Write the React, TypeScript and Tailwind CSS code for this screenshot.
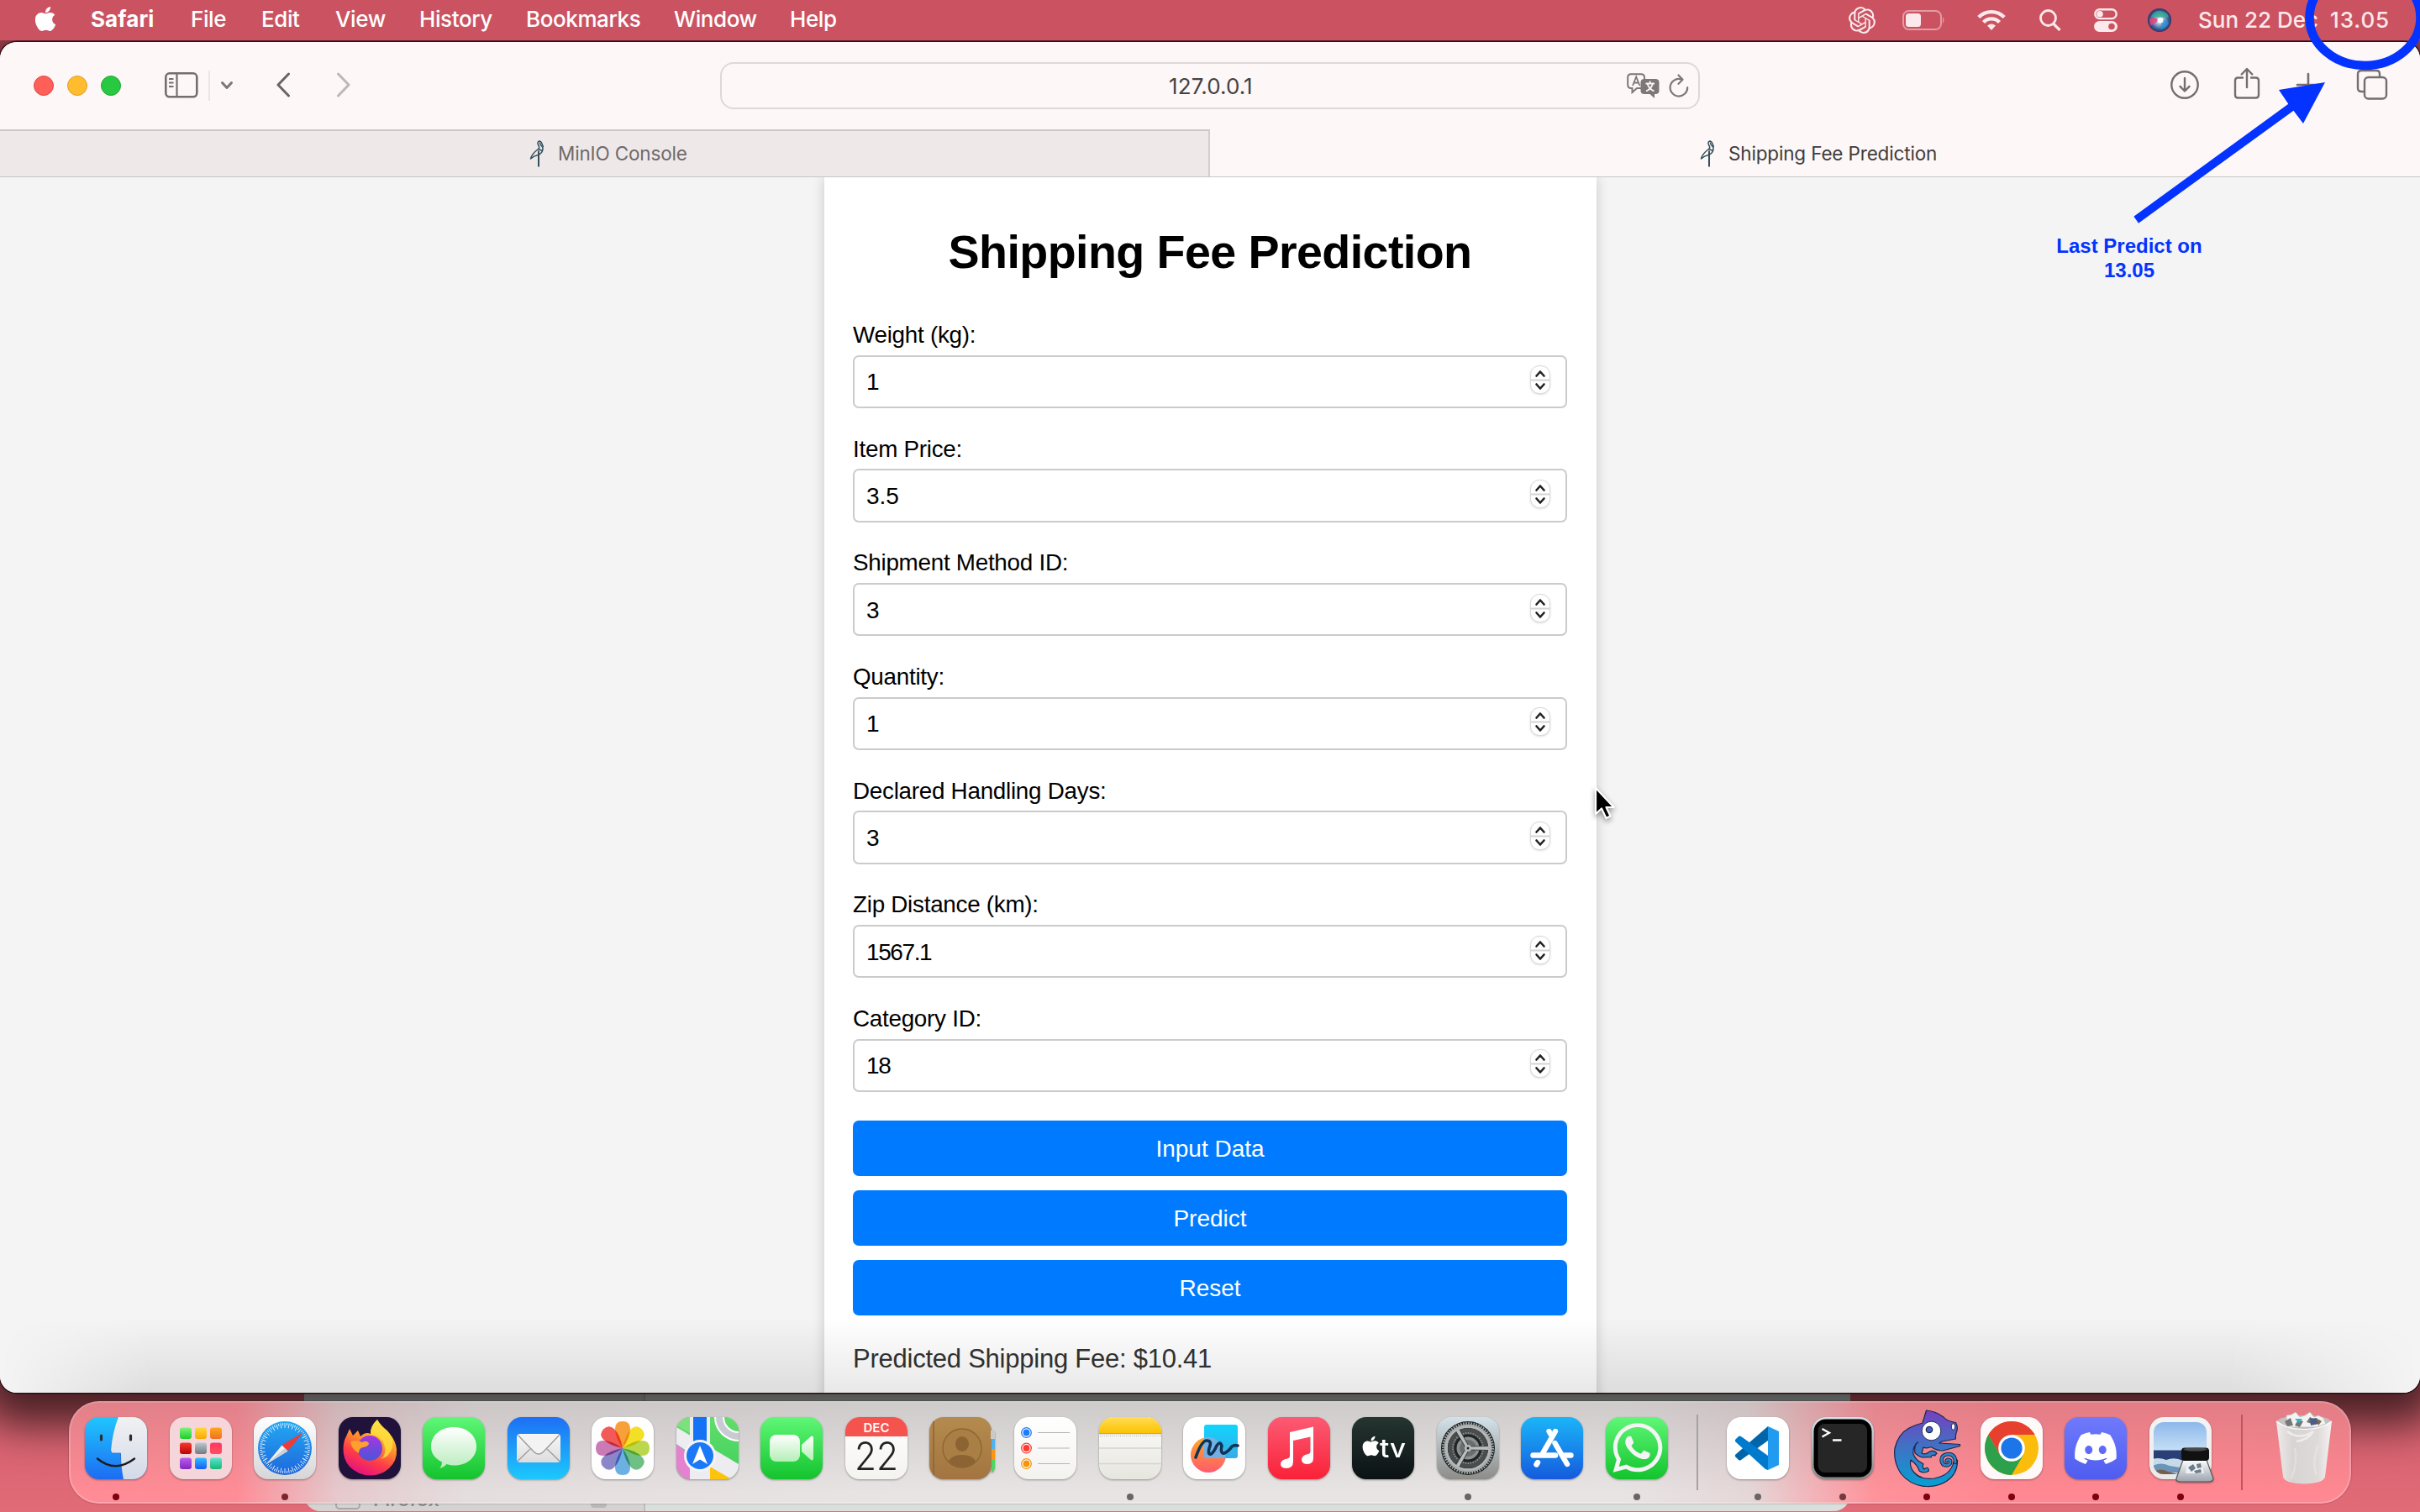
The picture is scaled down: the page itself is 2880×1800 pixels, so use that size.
import React from "react";
import { FaApple, FaDiscord, FaWhatsapp } from "react-icons/fa";
import { SiOpenai } from "react-icons/si";

const menus: [string, string][] = [
  ["Safari", "w-[119px] font-bold tracking-[0.1px]"],
  ["File", "w-[84px] font-medium"],
  ["Edit", "w-[88px] font-medium"],
  ["View", "w-[100px] font-medium"],
  ["History", "w-[127px] font-medium"],
  ["Bookmarks", "w-[176px] font-medium"],
  ["Window", "w-[138px] font-medium"],
  ["Help", "w-[80px] font-medium"],
];

const fields: [string, string, string][] = [
  ["Weight (kg):", "1", ""],
  ["Item Price:", "3.5", ""],
  ["Shipment Method ID:", "3", ""],
  ["Quantity:", "1", ""],
  ["Declared Handling Days:", "3", ""],
  ["Zip Distance (km):", "1567.1", "tracking-[-1.4px]"],
  ["Category ID:", "18", "tracking-[-1.2px]"],
];

function MenuBar() {
  return (
    <div className="relative z-10 flex h-12 w-full shrink-0 items-center bg-[#cb5361] text-[26px] leading-[46px] text-white">
      <FaApple className="ml-[39px] mb-1 h-[33px] w-[30px] shrink-0" />
      <div className="ml-[39px] flex tracking-[-0.4px]">
        {menus.map(([label, cls]) => (
          <span key={label} className={"h-12 whitespace-nowrap " + cls}>
            {label}
          </span>
        ))}
      </div>
      <div className="ml-auto flex items-center text-[#fbe9eb]">
        <SiOpenai className="h-8 w-8" />
        <svg className="ml-8 h-6 w-[51px]" viewBox="0 0 51 24">
          <rect x="1" y="1" width="45" height="22" rx="6.5" fill="none" stroke="#e39ba4" strokeWidth="2" />
          <rect x="4" y="4" width="18" height="16" rx="3.5" fill="#fbe9eb" />
          <path d="M48 8 Q51 12 48 16Z" fill="#e39ba4" />
        </svg>
        <svg className="ml-[38px] h-[26px] w-[34px]" viewBox="0 0 34 26" fill="none" stroke="#fbe9eb" strokeWidth="4.4">
          <path d="M1.8 9.6 C10 1 24 1 32.2 9.6" />
          <path d="M7.5 15.5 C12.5 10 21.500 10 26.500 15.500" />
          <path d="M17 25 L12 19.500 Q17 15.500 22 19.500 Z" fill="#fbe9eb" stroke="none" />
        </svg>
        <svg className="ml-10 h-[26px] w-[26px]" viewBox="0 0 26 26" fill="none" stroke="#fbe9eb" strokeWidth="2.800">
          <circle cx="10.500" cy="10.500" r="9" />
          <path d="M17 17.500 L24.500 25" strokeWidth="3.200" />
        </svg>
        <svg className="ml-[39px] h-[28px] w-[28px]" viewBox="0 0 28 28">
          <rect x="1.300" y="1.300" width="25.400" height="10.800" rx="5.400" fill="none" stroke="#fbe9eb" strokeWidth="2.400" />
          <circle cx="7" cy="6.700" r="3.800" fill="#fbe9eb" />
          <rect x="0" y="15" width="28" height="13" rx="6.500" fill="#fbe9eb" />
          <circle cx="21" cy="21.500" r="3.800" fill="#cb5361" />
        </svg>
        <svg className="ml-9 h-[28px] w-[28px]" viewBox="0 0 28 28">
          <defs>
            <radialGradient id="siri" cx="0.5" cy="0.5" r="0.5">
              <stop offset="0" stopColor="#ffffff" />
              <stop offset="0.35" stopColor="#9fb8dc" />
              <stop offset="0.75" stopColor="#3a5f9a" />
              <stop offset="1" stopColor="#2d3360" />
            </radialGradient>
          </defs>
          <circle cx="14" cy="14" r="14" fill="url(#siri)" />
          <path d="M3 12 Q7 2 15 3 Q24 4 25 11 Q18 9 14 13 Q8 7 3 12Z" fill="#2fb08f" opacity="0.750" />
          <path d="M2 13 Q8 8 13 14 Q8 19 3 20Z" fill="#e8417c" opacity="0.850" />
          <path d="M15 14 Q22 12 25 18 Q21 25 15 25 Q17 19 15 14Z" fill="#2495d8" opacity="0.700" />
          <circle cx="15" cy="14" r="3.500" fill="#fff" opacity="0.900" />
        </svg>
        <span className="ml-[32px] w-[157px] whitespace-nowrap font-medium">Sun 22 Dec</span>
        <span className="w-[107px] whitespace-nowrap font-medium tracking-[0.900px]">13.05</span>
      </div>
    </div>
  );
}

function Crane() {
  return (
    <svg className="h-[32px] w-[18px]" viewBox="0 0 18 32" fill="none" stroke="#33505c" strokeWidth="1.500" strokeLinejoin="round">
      <path d="M11 31.500 V12.500" strokeWidth="2" />
      <path d="M1.500 22 Q3 16 10.500 10.500 L15.500 12.500 Q14.500 16 10 17.500 Q5.500 18.500 1.500 22Z" />
      <path d="M15 13 Q17.500 9.500 14 6 Q12 4 12.800 2.500" />
      <path d="M10.500 10.500 Q13 9 10.500 5.500 Q9 2 11.800 1 Q14 1 15 4 L16.500 8" />
    </svg>
  );
}

function Toolbar() {
  return (
    <div className="flex h-[104px] shrink-0 items-center bg-[#fdf7f7]">
      <div className="flex w-[857px] items-center">
        <div className="ml-10 flex gap-4">
          <div className="size-6 rounded-full border border-[#e2483f] bg-[#fe5f57]" />
          <div className="size-6 rounded-full border border-[#e0a028] bg-[#febc2e]" />
          <div className="size-6 rounded-full border border-[#1fa833] bg-[#28c840]" />
        </div>
        <svg className="mb-0.5 ml-[52px] h-[31px] w-[40px]" viewBox="0 0 40 31" fill="none" stroke="#746e6f" strokeWidth="2.600">
          <rect x="1.300" y="1.300" width="37" height="28" rx="4.500" />
          <path d="M14.500 1.500 V29.500 M5 8 H10.500 M5 12.500 H10.500 M5 17 H10.500" strokeWidth="2.200" />
        </svg>
        <div className="ml-3 h-9 w-0.5 bg-[#ece5e6]" />
        <svg className="ml-3 h-[12px] w-[16px]" viewBox="0 0 16 12" fill="none" stroke="#7c7677" strokeWidth="3" strokeLinecap="round" strokeLinejoin="round">
          <path d="M2.500 2.500 L8 8.500 L13.500 2.500" />
        </svg>
        <svg className="mb-0.5 ml-[50px] h-[30px] w-[18px]" viewBox="0 0 18 30" fill="none" stroke="#6a6465" strokeWidth="3" strokeLinecap="round" strokeLinejoin="round">
          <path d="M15.500 2 L3 15 L15.500 28" />
        </svg>
        <svg className="mb-0.5 ml-[54px] h-[30px] w-[18px]" viewBox="0 0 18 30" fill="none" stroke="#bdb7b8" strokeWidth="3" strokeLinecap="round" strokeLinejoin="round">
          <path d="M2.500 2 L15 15 L2.500 28" />
        </svg>
      </div>
      <div className="flex h-14 w-[1166px] items-center rounded-2xl border-2 border-[#ded9d9]">
        <span className="ml-[532px] w-[545px] text-[26px] tracking-[0.1px] text-[#454142]">127.0.0.1</span>
        <svg className="h-[30px] w-[39px]" viewBox="0 0 39 30">
          <path d="M5 1.200 H17 Q21 1.200 21 5 V14 Q21 18 17 18 H12 L6.500 23 V18 H5 Q1.200 18 1.200 14 V5 Q1.200 1.200 5 1.200Z" fill="none" stroke="#7d7778" strokeWidth="2" />
          <path d="M7 15 L11.200 4.500 L15.400 15 M8.500 11.500 H14" fill="none" stroke="#7d7778" strokeWidth="1.800" />
          <path d="M21 7 H34 Q38.500 7 38.500 11 V21 Q38.500 25 34 25 H33 V30 L27.500 25 H21 Q16.500 25 16.500 21 V11 Q16.500 7 21 7Z" fill="#7d7778" />
          <path d="M22.500 12.500 H33 M27.700 9.500 V12 M31 12.500 Q29 19 23 21.500 M24.500 12.500 Q26.500 19 32.500 21.500" fill="none" stroke="#fdf7f7" strokeWidth="1.800" />
        </svg>
        <svg className="ml-[11px] h-[28px] w-[24px]" viewBox="0 0 24 28" fill="none" stroke="#7d7778" strokeWidth="2.200" strokeLinecap="round" strokeLinejoin="round">
          <path d="M22.200 16 A10.300 10.300 0 1 1 15.500 6.600" />
          <path d="M11.500 1.500 L16.500 6.800 L11.500 11.800" />
        </svg>
      </div>
      <div className="mb-[3px] ml-[559px] flex items-center">
        <svg className="h-[36px] w-[36px]" viewBox="0 0 36 36" fill="none" stroke="#746e6f" strokeWidth="2.400" strokeLinecap="round" strokeLinejoin="round">
          <circle cx="18" cy="18" r="15.700" />
          <path d="M18 10 V25 M12.500 19.800 L18 25.500 L23.500 19.800" />
        </svg>
        <svg className="mb-[3px] ml-[40px] h-[38px] w-[32px]" viewBox="0 0 32 38" fill="none" stroke="#746e6f" strokeWidth="2.400" strokeLinecap="round" strokeLinejoin="round">
          <path d="M11 12.500 H5.500 Q2 12.500 2 16 V33 Q2 36.500 5.500 36.500 H26.500 Q30 36.500 30 33 V16 Q30 12.500 26.500 12.500 H21" />
          <path d="M16 24 V2.500 M9.700 8.500 L16 2 L22.300 8.500" />
        </svg>
        <svg className="ml-[42px] h-[30px] w-[30px]" viewBox="0 0 30 30" fill="none" stroke="#746e6f" strokeWidth="2.600" strokeLinecap="round">
          <path d="M15 2 V28 M2 15 H28" />
        </svg>
        <svg className="ml-[42px] h-[37px] w-[38px]" viewBox="0 0 38 37" fill="none" stroke="#746e6f" strokeWidth="2.400">
          <path d="M9.500 27 H6.500 Q2 27 2 23 V6 Q2 2 6.500 2 H24 Q28 2 28 6 V9.500" />
          <rect x="10" y="10" width="26" height="25.500" rx="4.500" />
        </svg>
      </div>
    </div>
  );
}

function Spinner() {
  return (
    <div className="mr-[18px] mb-1 flex h-[34px] w-6 flex-col items-center justify-center rounded-[11px] border border-[#d9d9d9] bg-white shadow-sm">
      <svg className="h-[32px] w-[22px]" viewBox="0 0 22 32" fill="none" stroke="#222" strokeWidth="2.600" strokeLinecap="round" strokeLinejoin="round">
        <path d="M0 16.500 H22" stroke="#d4d4d4" strokeWidth="2" strokeLinecap="butt" />
        <path d="M6.500 11.500 L11 6.500 L15.500 11.500 M6.500 21.500 L11 26.500 L15.500 21.500" />
      </svg>
    </div>
  );
}

function PageBody() {
  return (
    <div className="relative flex h-[1447px] shrink-0 justify-center overflow-hidden bg-[#f4f4f4] font-['Liberation_Sans',Arial,sans-serif]">
      <div className="h-[1500px] w-[919px] shrink-0 bg-white px-[34.5px] pt-[56.500px] shadow-[0_0_14px_rgba(0,0,0,0.18)]">
        <h1 className="mb-[51.400px] text-center text-[55.600px] leading-[64px] font-bold tracking-[-0.580px] whitespace-nowrap text-black">
          Shipping Fee Prediction
        </h1>
        <div className="flex flex-col gap-[32.700px] text-black">
          {fields.map(([label, value, cls]) => (
            <div key={label} className="flex flex-col gap-[7.700px]">
              <label className="text-[27.800px] leading-8 tracking-[-0.260px]">{label}</label>
              <div className="flex h-[63.300px] items-center justify-between rounded-[7px] border-2 border-[#cbcbcb] bg-white">
                <span className={"ml-[14px] pt-0.5 text-[28px] leading-8 " + cls}>{value}</span>
                <Spinner />
              </div>
            </div>
          ))}
        </div>
        <div className="mt-[34.300px] flex flex-col gap-[17.300px]">
          {["Input Data", "Predict", "Reset"].map((t) => (
            <button key={t} className="h-[65.700px] rounded-[7px] bg-[#007bff] pt-0.5 text-[28px] leading-8 text-white">
              {t}
            </button>
          ))}
        </div>
        <p className="mt-[34.200px] text-[31px] leading-9 tracking-[-0.240px] text-[#333]">Predicted Shipping Fee: $10.41</p>
      </div>
      <div className="absolute inset-x-0 bottom-0 h-[90px] bg-linear-to-b from-black/0 to-black/9 [mask-image:linear-gradient(to_right,transparent,black_180px,black_2650px,transparent)]" />
    </div>
  );
}

function SafariWindow() {
  return (
    <div className="relative mt-0.5 flex h-[1608px] w-full flex-col overflow-hidden rounded-[20px] bg-[#fdf7f7] shadow-[0_0_0_1.5px_#2b0f14,0_14px_50px_24px_rgba(0,0,0,0.66)]">
      <Toolbar />
      <div className="flex h-[56px] shrink-0 text-[22.500px] tracking-[-0.160px]">
        <div className="flex w-[1440px] items-center border-t-2 border-r-2 border-t-[#cdc7c7] border-r-[#d3cdcd] bg-[#eee8e8] text-[#6f6a6b]">
          <div className="ml-[630px]">
            <Crane />
          </div>
          <span className="ml-4 whitespace-nowrap">MinIO Console</span>
        </div>
        <div className="flex flex-1 items-center pt-0.5 text-[#403c3d]">
          <div className="ml-[583px]">
            <Crane />
          </div>
          <span className="ml-4 whitespace-nowrap">Shipping Fee Prediction</span>
        </div>
      </div>
      <div className="h-px shrink-0 bg-[#cbc6c6]" />
      <PageBody />
    </div>
  );
}

/* ---------- Dock icons: 74 × 74 drawings ---------- */

function Grad({ id, a, b }: { id: string; a: string; b: string }) {
  return (
    <linearGradient id={id} x1="0" y1="0" x2="0" y2="1">
      <stop offset="0" stopColor={a} />
      <stop offset="1" stopColor={b} />
    </linearGradient>
  );
}

function Tile({ id, a, b, children }: { id: string; a: string; b: string; children?: React.ReactNode }) {
  return (
    <svg className="h-[74px] w-[74px] overflow-visible drop-shadow-[0_1px_1px_rgba(0,0,0,0.35)]" viewBox="0 0 74 74">
      <defs>
        <Grad id={id} a={a} b={b} />
        <clipPath id={id + "c"}>
          <rect width="74" height="74" rx="17" />
        </clipPath>
      </defs>
      <rect width="74" height="74" rx="17" fill={`url(#${id})`} />
      {children}
    </svg>
  );
}

const Finder = () => (
  <Tile id="fi" a="#1fc6fe" b="#1d6cf2">
    <defs>
      <Grad id="fi2" a="#f1f1f3" b="#d3dae8" />
    </defs>
    <path clipPath="url(#fic)" d="M40 0 H74 V74 H46 Q43 60 43 43 H33 Q31 43 31 40 Q33 17 40 0Z" fill="url(#fi2)" />
    <path d="M42.500 51 V43 H33 Q31 43 31 40" fill="none" stroke="#2a6fd0" strokeWidth="0.800" />
    <path d="M15 49.500 Q36 67 59 49.500" fill="none" stroke="#1b1b20" strokeWidth="2.400" strokeLinecap="round" />
    <path d="M19.500 22 V27 M54.500 22 V27" stroke="#2a2c33" strokeWidth="3.200" strokeLinecap="round" />
  </Tile>
);

const padColors = [
  ["#7df37a", "#1cce2b"], ["#ffd83a", "#f8a805"], ["#ffa81c", "#ee7024"],
  ["#f53b2e", "#b90407"], ["#b9c7cf", "#6f7b80"], ["#ff3763", "#ff4f5f"],
  ["#b95cf0", "#8328c0"], ["#28c0ff", "#1d5bf0"], ["#5be3cf", "#13b877"],
];
const Launchpad = () => (
  <Tile id="lp" a="#f6d6da" b="#f4d5d9">
    {padColors.map(([a, b], i) => (
      <g key={i}>
        <defs>
          <Grad id={"pad" + i} a={a} b={b} />
        </defs>
        <rect x={12 + (i % 3) * 18} y={12.500 + Math.floor(i / 3) * 18} width="14" height="13.500" rx="3" fill={`url(#pad${i})`} />
      </g>
    ))}
  </Tile>
);

const ticks = Array.from({ length: 72 }, (_, i) => i * 5);
const SafariIcon = () => (
  <Tile id="sf" a="#ffffff" b="#d6d6d8">
    <defs>
      <Grad id="sf2" a="#22a8f2" b="#1f67dc" />
    </defs>
    <circle cx="37" cy="37" r="32" fill="url(#sf2)" />
    {ticks.map((d) => (
      <path key={d} d={d % 10 ? "M37 7 V10" : "M37 7 V13"} stroke="#e6f3ff" strokeWidth="0.900" transform={`rotate(${d} 37 37)`} />
    ))}
    <path d="M59 18 L40.500 40.500 L33.500 33.500Z" fill="#ef3b35" />
    <path d="M15 56 L33.500 33.500 L40.500 40.500Z" fill="#f1f1f1" />
    <path d="M15 56 L37 37 L40.500 40.500Z" fill="#cdd0d6" />
  </Tile>
);

const Firefox = () => (
  <Tile id="ff" a="#20123a" b="#20123a">
    <defs>
      <linearGradient id="ff2" x1="0.8" y1="0" x2="0.35" y2="1">
        <stop offset="0" stopColor="#fff14a" />
        <stop offset="0.4" stopColor="#ff9a2a" />
        <stop offset="0.7" stopColor="#ff3d47" />
        <stop offset="1" stopColor="#e3127f" />
      </linearGradient>
      <Grad id="ff3" a="#a437e0" b="#4a55d8" />
    </defs>
    <path d="M46 3 Q50 11 60 19 Q68 28 69 38 Q70 52 60 61 Q50 70 37 69.500 Q23 69 13 59 Q5 50 5.500 37 Q6 28 9 23 L13 14 L17 22 L23 16 L26 23 Q32 17 38 20 Q37 11 46 3Z" fill="url(#ff2)" />
    <path d="M46 3 Q38 11 38 21 Q50 22 54 32 Q58 44 50 50 Q60 48 64 36 Q66 25 58 16 Q50 10 46 3Z" fill="#ffe03f" opacity="0.800" />
    <circle cx="37" cy="37" r="15" fill="url(#ff3)" />
    <path d="M14 29 Q24 27 28 30 Q33 27 36 31 Q36 35 29 36 Q24 37 24 43 Q15 38 14 29Z" fill="#ffa12b" />
  </Tile>
);

const Messages = () => (
  <Tile id="ms" a="#5ff777" b="#13c32d">
    <defs>
      <Grad id="ms2" a="#ffffff" b="#b9ecbd" />
    </defs>
    <path d="M37 12 C53 12 64 22 64 35 C64 48 53 57.500 38 57.500 Q33 57.500 28.500 56 Q25 60 20 61 Q23 58 23 53.500 C14 49 10 43 10 35 C10 22 21 12 37 12Z" fill="url(#ms2)" />
  </Tile>
);

const Mail = () => (
  <Tile id="ma" a="#1e6ff4" b="#1cc9fd">
    <defs>
      <Grad id="ma2" a="#f8f8f8" b="#dcdcdc" />
    </defs>
    <rect x="11" y="20" width="52" height="34" rx="4" fill="url(#ma2)" />
    <path d="M12 52.500 L27 38 M62 52.500 L47 38" stroke="#999" strokeWidth="1.200" />
    <path d="M12.500 21.500 L31 41 Q37 47 43 41 L61.500 21.500" fill="#f3f3f3" stroke="#999" strokeWidth="1.300" />
  </Tile>
);

const petals = ["#f7941e", "#f2dc07", "#b5d334", "#5bb974", "#58a7e0", "#7b76c4", "#c468ac", "#f2433f"];
const Photos = () => (
  <Tile id="ph" a="#ffffff" b="#fdfdfd">
    {petals.map((c, i) => (
      <path key={c} d="M37 37 Q28 24 28 14 Q28 5 37 5 Q46 5 46 14 Q46 24 37 37Z" fill={c} opacity="0.880" className="mix-blend-multiply" transform={`rotate(${i * 45} 37 37)`} />
    ))}
  </Tile>
);

const Maps = () => (
  <Tile id="mp" a="#62dd6c" b="#3fd05a">
    <g clipPath="url(#mpc)">
      <path d="M0 0 H18 V20 L0 10Z" fill="#7ee07c" />
      <path d="M0 32 L18 46 V74 H0Z" fill="#e582cf" />
      <path d="M0 12 L74 56 V74 H62 L0 32Z" fill="#ececf1" />
      <path d="M38 58 L66 74 H38Z" fill="#fcc40c" />
      <rect x="16" y="0" width="24" height="74" fill="#ececf1" />
      <rect x="20" y="0" width="16" height="42" fill="#1473f5" />
      <circle cx="74" cy="0" r="23" fill="none" stroke="#fff" strokeWidth="12" />
      <circle cx="74" cy="0" r="23" fill="none" stroke="#c9cad3" strokeWidth="8" />
    </g>
    <circle cx="28" cy="46" r="19" fill="#f4f4f8" />
    <circle cx="28" cy="46" r="16" fill="#1b78f6" />
    <path d="M28 34 L37 56 L28 50.500 L19 56Z" fill="#fff" />
  </Tile>
);

const FaceTime = () => (
  <Tile id="ft" a="#5ff777" b="#13c32d">
    <defs>
      <Grad id="ft2" a="#ffffff" b="#b4efb5" />
    </defs>
    <rect x="11" y="21" width="36" height="32" rx="8" fill="url(#ft2)" />
    <path d="M49 33 L60 23 Q63 21.500 63 25 V49 Q63 52.500 60 51 L49 41Z" fill="url(#ft2)" />
  </Tile>
);

const Calendar = () => (
  <Tile id="ca" a="#ffffff" b="#f4f3f0">
    <rect clipPath="url(#cac)" width="74" height="23" fill="#f5544e" />
    <text x="37" y="17.500" textAnchor="middle" fontSize="15" fontWeight="600" fill="#fff" fontFamily="Inter" textLength="31">DEC</text>
    <text x="37" y="62.500" textAnchor="middle" fontSize="46" fontWeight="300" fill="#222" fontFamily="Inter" textLength="52" lengthAdjust="spacingAndGlyphs">22</text>
  </Tile>
);

const Contacts = () => (
  <Tile id="co" a="#b48b4e" b="#a37440">
    <path d="M73 16 h3 q2 0 2 3 v7 h-5z" fill="#c9c9c9" />
    <path d="M74 26 h4 v12 h-4z" fill="#4db4f2" />
    <path d="M74 38 h4 v13 h-4z" fill="#ff9412" />
    <path d="M74 51 h4 v9 q-1 5 -4 6z" fill="#4bd763" />
    <path d="M5 5 V69" stroke="#8b6535" strokeWidth="1.500" />
    <g clipPath="url(#coc)">
      <circle cx="39" cy="37" r="23" fill="#a97f45" stroke="#8c6433" strokeWidth="1.300" />
      <ellipse cx="39" cy="32" rx="8" ry="9" fill="#8c6433" />
      <path d="M23 53 Q26 45 39 45 Q52 45 55 53 Q48 60 39 60 Q30 60 23 53Z" fill="#8c6433" />
    </g>
  </Tile>
);

const Reminders = () => (
  <Tile id="re" a="#ffffff" b="#f4f2ef">
    {["#1a7bfb", "#fb3b30", "#f79408"].map((c, i) => (
      <g key={c}>
        <circle cx="14.500" cy={18.500 + i * 18.500} r="5.800" fill="#fff" stroke={c} strokeWidth="1.300" />
        <circle cx="14.500" cy={18.500 + i * 18.500} r="3.900" fill={c} />
        <path d={`M28 ${18.500 + i * 18.500} H66`} stroke="#b5b5b8" strokeWidth="1.200" />
      </g>
    ))}
  </Tile>
);

const Notes = () => (
  <Tile id="no" a="#fdfdfb" b="#e6e5de">
    <defs>
      <Grad id="no2" a="#ffdc58" b="#fdc300" />
    </defs>
    <rect clipPath="url(#noc)" width="74" height="19" fill="url(#no2)" />
    <path d="M0 19.600 H74" stroke="#a8a59a" strokeWidth="1.200" />
    <path d="M1 22.500 H74" stroke="#b4b4b0" strokeWidth="1" strokeDasharray="1 1.400" />
    <path d="M0 37 H74 M0 55.500 H74" stroke="#d4d4d2" strokeWidth="1.400" />
  </Tile>
);

const Freeform = () => (
  <Tile id="fr" a="#ffffff" b="#fdfdfd">
    <defs>
      <Grad id="fr1" a="#ffa922" b="#ff5a6e" />
      <Grad id="fr2" a="#10d5fd" b="#38abe6" />
    </defs>
    <circle cx="30" cy="45" r="21" fill="url(#fr1)" />
    <rect x="25" y="9" width="40" height="40" rx="3" fill="url(#fr2)" />
    <path d="M25 49 V24.500 Q30 22 37 25.500 Q51 33 50.500 49Z" fill="#86aee2" opacity="0.800" />
    <path d="M15 48 Q22 28 28 28 Q35 28 31 37 Q29 45 33 44 Q36 43 40 34 Q44 28 46 34 Q44 44 49 43 Q54 41 58 35 Q61 33 65 34" fill="none" stroke="#0d3558" strokeWidth="3.600" strokeLinecap="round" />
  </Tile>
);

const Music = () => (
  <Tile id="mu" a="#fb5b73" b="#fa2138">
    <path d="M26 18 L54 11.500 V49 Q54 56 46.500 56 Q39.500 55.500 40 50 Q41 45 48 44 Q50.500 43.500 50.500 41 V23.500 L30 28 V53 Q30 61 21.500 61 Q14.500 60.500 15 55 Q16 50.500 23 49.500 Q26 49 26 46Z" fill="#fff" />
  </Tile>
);

const AppleTv = () => (
  <Tile id="tv" a="#253530" b="#0b1215">
    <g transform="translate(9 21)">
      <FaApple size={27} color="#fff" />
    </g>
    <text x="33" y="48" fontSize="31" fontWeight="500" fill="#fff" fontFamily="Inter" textLength="31" lengthAdjust="spacingAndGlyphs">tv</text>
  </Tile>
);

const Settings = () => (
  <Tile id="se" a="#d3e2ea" b="#8d8c88">
    <circle cx="37" cy="37" r="32" fill="#1e2323" />
    <circle cx="37" cy="37" r="26.500" fill="none" stroke="#a6a9aa" strokeWidth="4" />
    <circle cx="37" cy="37" r="29.500" fill="none" stroke="#a6a9aa" strokeWidth="3" strokeDasharray="1.600 1.490" />
    <circle cx="37" cy="37" r="24" fill="#4a4d4e" />
    <circle cx="37" cy="37" r="15" fill="#8d8f90" stroke="#1e2323" strokeWidth="3" />
    <circle cx="37" cy="37" r="18" fill="none" stroke="#8a8c8d" strokeWidth="2" strokeDasharray="1.500 1.500" />
    <circle cx="37" cy="37" r="10" fill="#6b6e6f" />
    {[0, 120, 240].map((d) => (
      <path key={d} d="M37 35 L62 34.500 V39.500 L37 39Z" fill="#b9bdbf" stroke="#2b2f30" strokeWidth="0.800" transform={`rotate(${d} 37 37)`} />
    ))}
    <circle cx="37" cy="37" r="4" fill="#b9bdbf" />
    <circle cx="37" cy="37" r="1.500" fill="#222" />
    <circle cx="37" cy="37" r="25.500" fill="none" stroke="#b5b8b9" strokeWidth="2.500" />
  </Tile>
);

const AppStore = () => (
  <Tile id="as" a="#1bb5f8" b="#155bdd">
    <g fill="none" stroke="#fff" strokeWidth="6.400" strokeLinecap="round">
      <path d="M41 17 L26 43" />
      <path d="M33.500 17 L35.500 20.500 M40.500 31 L55 56" />
      <path d="M14.500 45.500 H41 M52 45.500 H59.500" />
      <path d="M20 54 L18.500 56.500" />
    </g>
  </Tile>
);

const WhatsApp = () => (
  <Tile id="wa" a="#5ff777" b="#13c32d">
    <g transform="translate(4.500 3)">
      <FaWhatsapp size={67} color="#f4f4f4" />
    </g>
  </Tile>
);

const VsCode = () => (
  <Tile id="vs" a="#ffffff" b="#ffffff">
    <path d="M49 11 L62 17 V57 L49 63 Z" fill="#209bf0" />
    <path d="M49 11 V28 L17 51 Q15.500 52 14 51 L10.500 47.500 Q9 46 10.500 44.500Z" fill="#0065a9" />
    <path d="M49 63 V46 L17 23 Q15.500 22 14 23 L10.500 26.500 Q9 28 10.500 29.500 L46 62Z" fill="#007acc" />
  </Tile>
);

const Terminal = () => (
  <Tile id="te" a="#d4e2ea" b="#858585">
    <rect x="2.500" y="2.500" width="69" height="69" rx="14.500" fill="#000" />
    <rect x="7.500" y="8" width="58.500" height="58" rx="8" fill="#262626" />
    <path d="M12.500 14 L21 18.700 L12.500 23.500 M25 27.500 H35.500" fill="none" stroke="#fff" strokeWidth="2.300" />
  </Tile>
);

const Chameleon = () => (
  <svg className="h-[92px] w-[82px] shrink-0 overflow-visible" viewBox="0 0 82 92">
    <defs>
      <linearGradient id="ch" x1="0" y1="0" x2="0" y2="1">
        <stop offset="0" stopColor="#7540c0" />
        <stop offset="0.5" stopColor="#3d74c4" />
        <stop offset="1" stopColor="#079fd3" />
      </linearGradient>
    </defs>
    <path
      d="M40.500 1 Q52 2 61 9 Q65 14 75.500 15.500 Q79 22 76 28 Q75 32 75.500 35 L59 38 L56 40 L80.500 41.500 L80.500 43.500 L60 49 Q53 49 46 44.500 Q41 47 37 45 L35 52 Q39 54 43 51 Q49 47 53 52 L50.500 55 Q47 53 46 57 L42 56.500 Q35 58 31 55 L27 52 Q26 46 28 41 L30.500 39 Q24 44 25 53 Q28 60 34 63 L37 65 Q35 68 38 71 Q43 67 43.500 73 Q38 77 32 73 Q31 67 22 60 Q20 68 26 75 Q34 84 50 82 Q70 78 73 62 L77.500 60 Q78 76 65 85 Q55 92 41 91.500 Q22 91 10 76 Q1 62 3 46 Q7 29 20 22 Q28 18 36 16Z"
      fill="url(#ch)" stroke="#17284e" strokeWidth="1.200" strokeLinejoin="round"
    />
    <g fill="none" strokeLinecap="round">
      <path d="M75 63 Q75 53 66.500 53 Q58.500 54 58.500 60 Q59 66.500 65 66.500 Q70 65.500 69 61 Q66.500 58.500 64.500 61" stroke="#17284e" strokeWidth="4.600" />
      <path d="M75 63 Q75 53 66.500 53 Q58.500 54 58.500 60 Q59 66.500 65 66.500 Q70 65.500 69 61 Q66.500 58.500 64.500 61" stroke="#2b86c9" strokeWidth="2.600" />
    </g>
    <circle cx="46.500" cy="25.500" r="11.300" fill="#fff" stroke="#222c58" />
    <circle cx="44" cy="24" r="3.700" fill="#4263bd" stroke="#1d2b52" strokeWidth="1.300" />
    <ellipse cx="72.500" cy="20.500" rx="2.200" ry="3.800" fill="#fff" stroke="#222c58" />
  </svg>
);

const Chrome = () => (
  <Tile id="cr" a="#fffafa" b="#fff8f8">
    <circle cx="37" cy="37" r="32" fill="#fbbc0b" />
    <path d="M37 21 H64.700 A32 32 0 0 0 9.300 21 L23 45Z" fill="#e8402f" />
    <path d="M9.300 21 A32 32 0 0 0 37 69 L51 45 L37 50 L23 45Z" fill="#2ca04a" />
    <circle cx="37" cy="37" r="15.800" fill="#fff" />
    <circle cx="37" cy="37" r="12.600" fill="#1d75ea" />
  </Tile>
);

const Discord = () => (
  <Tile id="di" a="#6f7afc" b="#4f5df0">
    <g transform="translate(10 10)">
      <FaDiscord size={54} color="#fff" />
    </g>
  </Tile>
);

const Preview = () => (
  <Tile id="pv" a="#f4f4f4" b="#e9e9e9">
    <defs>
      <Grad id="pv1" a="#83b1ea" b="#c6e0f5" />
      <Grad id="pv3" a="#ffffff" b="#9aa3ad" />
      <clipPath id="pv2">
        <rect x="5" y="6" width="63" height="62" rx="12" />
      </clipPath>
    </defs>
    <g clipPath="url(#pv2)">
      <rect width="74" height="40" fill="url(#pv1)" />
      <rect y="39.500" width="74" height="35" fill="#2a3f76" />
      <path d="M0 51 Q10 47 20 51 Q30 47 40 52 V74 H0Z" fill="#c6dbe9" />
      <path d="M4 58 Q14 53 24 58 L36 60 V66 H6Z" fill="#6c93b8" />
      <path d="M5 65 Q14 60 22 65 L34 68 H8Z" fill="#75604a" />
    </g>
    <path d="M40 51 H68 L76 73 Q76 77 70 77 H38 Q31 77 32 73Z" fill="url(#pv3)" stroke="#555" strokeWidth="1.200" />
    <path d="M45 54 H62 L65 67 H43Z" fill="#edf1f5" />
    <path d="M46 60 l6 -4 l3 5 l-5 4z M56 56 l5 -1 l1 5 l-5 1z M53 64 l8 -2 l1 4 l-7 1z" fill="#6e7b89" />
    <rect x="38" y="36.500" width="33" height="15.500" rx="4" fill="#111" />
    <ellipse cx="54.500" cy="38.500" rx="14" ry="2" fill="#4a4a4a" />
  </Tile>
);

const Trash = () => (
  <svg className="h-[88px] w-[70px] shrink-0 overflow-visible" viewBox="0 0 70 88">
    <defs>
      <linearGradient id="tr" x1="0" y1="0" x2="1" y2="0">
        <stop offset="0" stopColor="#eeeaea" />
        <stop offset="0.3" stopColor="#d8d4d4" />
        <stop offset="0.75" stopColor="#dedada" />
        <stop offset="1" stopColor="#f6f3f3" />
      </linearGradient>
    </defs>
    <ellipse cx="35" cy="13" rx="32.500" ry="8" fill="#c7bebf" />
    <path d="M7 8 L14 13 L14 5 L20 4 L25 1 L30 7 L36 5 L42 1 L47 7 L52 5 L58 8 L61 15 L50 19 H18Z" fill="#f3f3f3" stroke="#b9b9b9" strokeWidth="0.700" />
    <path d="M12 12 L19 8 L22 17 L15 18Z M28 10 L34 12 L30 19 L24 17Z M42 7 L48 10 L44 15 L38 13Z" fill="#777" />
    <path d="M24 9 L33 9 L29 14Z" fill="#29b8c9" />
    <path d="M42 9 L50 8 L53 15 L43 17Z" fill="#4d5e86" />
    <path d="M51 9 L56 12 L52 17Z" fill="#7f6b44" />
    <path d="M2 12 Q16 22 35 21.500 Q54 22 68 12 L60 78 Q58 86 35 86.500 Q12 86 10 78Z" fill="url(#tr)" />
    <path d="M15 24 Q30 35 46 24 Q40 34 26 36" fill="none" stroke="#f7f5f5" strokeWidth="2.500" opacity="0.700" />
    <path d="M20 80 Q28 60 24 44 M50 76 Q44 60 52 40" fill="none" stroke="#f7f5f5" strokeWidth="2.500" opacity="0.300" />
    <path d="M2 12 Q16 22 35 21.500 Q54 22 68 12" fill="none" stroke="#fff" strokeWidth="1.200" />
  </svg>
);

const leftApps: [React.FC, string][] = [
  [Finder, "bg-[#7c0010]"], [Launchpad, ""], [SafariIcon, "bg-[#7a262c]"], [Firefox, ""], [Messages, ""], [Mail, ""],
  [Photos, ""], [Maps, ""], [FaceTime, ""], [Calendar, ""], [Contacts, ""], [Reminders, ""], [Notes, "bg-[#6b6464]"],
  [Freeform, ""], [Music, ""], [AppleTv, ""], [Settings, "bg-[#6b6464]"], [AppStore, ""], [WhatsApp, "bg-[#6b6464]"],
];
const rightApps: [React.FC, string][] = [
  [VsCode, "bg-[#6b6464]"], [Terminal, "bg-[#74383e]"], [Chameleon, "bg-[#7c0010]"], [Chrome, "bg-[#7c0010]"],
  [Discord, "bg-[#7c0010]"], [Preview, "bg-[#7c0010]"],
];

function DockItem({ app: App, dot }: { app: React.FC; dot: string }) {
  return (
    <div className="flex h-[122px] w-[100.560px] shrink-0 flex-col items-center">
      <div className="mt-[19px] flex h-[74px] w-full items-center justify-center">
        <App />
      </div>
      {dot && <div className={"mt-[17px] size-2 rounded-full " + dot} />}
    </div>
  );
}

function Dock() {
  return (
    <div className="absolute top-[1668px] left-[82px] flex h-[122px] w-[2716px] overflow-hidden rounded-[36px] bg-[linear-gradient(to_right,#ff8b95_0,#fe8d97_200px,#e6c9cc_320px,#e5dedf_480px,#e8e4e4_1000px,#e8e4e4_1850px,#e5d7d8_2000px,#ff929b_2150px,#ff8892_2300px)] shadow-[inset_0_0_0_2px_rgba(255,255,255,0.22),0_0_2px_rgba(0,0,0,0.4)]">
      <div className="absolute inset-0 bg-linear-to-b from-[#3c3c3c]/15 to-transparent to-90%" />
      <div className="relative flex pl-[5.700px]">
        {leftApps.map(([A, dot], i) => (
          <DockItem key={i} app={A} dot={dot} />
        ))}
        <div className="flex w-[43.700px] shrink-0 justify-center">
          <div className="mt-4 h-[90px] w-0.5 bg-[#a7a1a2]" />
        </div>
        {rightApps.map(([A, dot], i) => (
          <DockItem key={i} app={A} dot={dot} />
        ))}
        <div className="flex w-[46.600px] shrink-0 justify-center">
          <div className="mt-4 h-[90px] w-0.5 bg-[#c4545f]" />
        </div>
        <DockItem app={Trash} dot="" />
      </div>
    </div>
  );
}

function FinderWindow() {
  return (
    <div className="absolute top-[1500px] left-[362px] flex h-[299px] w-[1840px] overflow-hidden rounded-b-[20px] bg-[#dadedc]">
      <div className="flex w-[406px] items-end border-r-2 border-[#bfbdbd] bg-[#d5d2d2] pb-[2px]">
        <div className="ml-[37px] h-[17px] w-[30px] rounded-[5px] border-2 border-[#a9a6a6]" />
        <span className="ml-[15px] text-[24px] leading-[24px] font-medium text-[#8d8a8a]">Firefox</span>
        <div className="ml-auto mr-[44px] mb-0.5 h-[14px] w-[19px] rounded-sm bg-[#bab7b7]" />
      </div>
    </div>
  );
}

function Annotation() {
  return (
    <>
      <svg className="absolute top-0 left-[2500px] z-20 h-[280px] w-[380px]" viewBox="2500 0 380 280">
        <ellipse cx="2814.500" cy="21" rx="66" ry="57" fill="none" stroke="#0433ff" strokeWidth="10.500" />
        <path d="M2767 98 L2741 147 L2729.500 131.700 L2545 265.700 L2539.400 257.700 L2723.300 123.700 L2712 107Z" fill="#0433ff" />
      </svg>
      <div className="absolute top-[278px] left-[2434px] w-[200px] text-center font-['Liberation_Sans',Arial,sans-serif] text-[24px] leading-[29px] font-bold text-[#0433ff]">
        Last Predict on
        <br />
        13.05
      </div>
    </>
  );
}

export default function App() {
  return (
    <div className="relative flex h-[1800px] w-[2880px] flex-col overflow-hidden bg-[linear-gradient(to_bottom,#cb5361_0,#c4525f_85%,#e26b78_100%)] font-['Inter',sans-serif]">
      <FinderWindow />
      <MenuBar />
      <SafariWindow />
      <Dock />
      <Annotation />
      <svg className="absolute top-[936px] left-[1896px] h-[42px] w-[28px] drop-shadow-[0_3px_3px_rgba(0,0,0,0.4)]" viewBox="0 0 28 42">
        <path d="M3 2 V33 L10 26.500 L15.500 38 L20.500 35.500 L15.500 25 H24.500Z" fill="#000" stroke="#fff" strokeWidth="2.200" strokeLinejoin="round" />
      </svg>
    </div>
  );
}
